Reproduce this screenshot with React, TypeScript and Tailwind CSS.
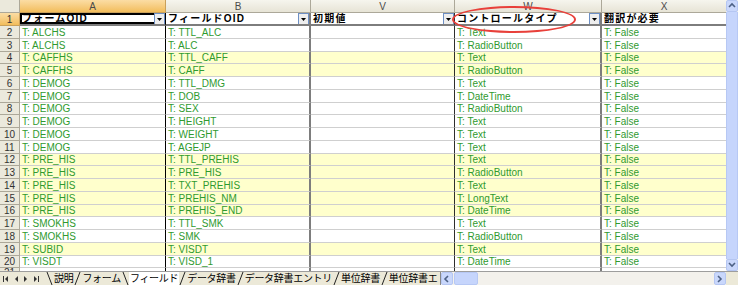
import React from 'react'

const rows = [
  ['ALCHS', 'TTL_ALC', 'Text', false],
  ['ALCHS', 'ALC', 'RadioButton', false],
  ['CAFFHS', 'TTL_CAFF', 'Text', true],
  ['CAFFHS', 'CAFF', 'RadioButton', true],
  ['DEMOG', 'TTL_DMG', 'Text', false],
  ['DEMOG', 'DOB', 'DateTime', false],
  ['DEMOG', 'SEX', 'RadioButton', false],
  ['DEMOG', 'HEIGHT', 'Text', false],
  ['DEMOG', 'WEIGHT', 'Text', false],
  ['DEMOG', 'AGEJP', 'Text', false],
  ['PRE_HIS', 'TTL_PREHIS', 'Text', true],
  ['PRE_HIS', 'PRE_HIS', 'RadioButton', true],
  ['PRE_HIS', 'TXT_PREHIS', 'Text', true],
  ['PRE_HIS', 'PREHIS_NM', 'LongText', true],
  ['PRE_HIS', 'PREHIS_END', 'DateTime', true],
  ['SMOKHS', 'TTL_SMK', 'Text', false],
  ['SMOKHS', 'SMK', 'RadioButton', false],
  ['SUBID', 'VISDT', 'Text', true],
  ['VISDT', 'VISD_1', 'DateTime', false],
] as const

const font = "font-['Liberation_Sans','Noto_Sans_CJK_JP',sans-serif]"

const colW = [
  'w-[146px] border-r border-black',
  'w-[145px] border-r-2 border-[#7d7d7d]',
  'w-[144px] border-r border-[#2e2e2e]',
  'w-[147px] border-r-2 border-[#7d7d7d]',
  'w-[124px]',
]

function DropBtn() {
  return (
    <div className="absolute right-0 top-0 w-[11px] h-[12px] bg-[#eeeeee] border border-[#6d8fc4] flex items-center justify-center">
      <svg width="5" height="3" viewBox="0 0 5 3">
        <path d="M0 0h5L2.5 3z" fill="#000" />
      </svg>
    </div>
  )
}

function Chevron({ dir }: { dir: 'up' | 'down' | 'left' | 'right' }) {
  const d = {
    up: 'M1 5 L4 2 L7 5',
    down: 'M1 2 L4 5 L7 2',
    left: 'M5 1 L2 4 L5 7',
    right: 'M2 1 L5 4 L2 7',
  }[dir]
  return (
    <svg width="8" height="8" viewBox="0 0 8 8">
      <path d={d} fill="none" stroke="#4d6185" strokeWidth="1.6" />
    </svg>
  )
}

function NavArrow({ dir, bar }: { dir: 'left' | 'right'; bar?: boolean }) {
  return (
    <svg width="10" height="8" viewBox="0 0 10 8">
      {dir === 'left' ? (
        <>
          {bar && <rect x="2" y="1" width="1" height="6" fill="#333" />}
          <path d="M7 1 L4 4 L7 7z" fill="#333" />
        </>
      ) : (
        <>
          <path d="M3 1 L6 4 L3 7z" fill="#333" />
          {bar && <rect x="7" y="1" width="1" height="6" fill="#333" />}
        </>
      )}
    </svg>
  )
}

function Slash({ back }: { back?: boolean }) {
  return (
    <svg width="7" height="13" viewBox="0 0 7 13" className="shrink-0">
      <line x1={back ? 1 : 6} y1="0" x2={back ? 6 : 1} y2="13" stroke="#222" strokeWidth="1" />
    </svg>
  )
}

export default function App() {
  const tabs = ['説明', 'フォーム', 'フィールド', 'データ辞書', 'データ辞書エントリ', '単位辞書', '単位辞書エ']
  return (
    <div className={`relative w-[738px] h-[285px] overflow-hidden bg-white flex flex-col ${font}`}>
      <div className="flex h-[271px] overflow-hidden">
        <div className="w-[726px] flex flex-col">
          {/* column letters */}
          <div className="flex h-[13px] shrink-0 text-[10px] text-[#4a4a4a]">
            <div className="w-[20px] bg-[#ebe9dc] border-r border-b border-[#aca899]" />
            {['A', 'B', 'V', 'W', 'X'].map((c, i) => (
              <div
                key={c}
                className={`flex items-center justify-center border-b ${
                  i === 0
                    ? 'w-[146px] bg-gradient-to-b from-[#fbdda4] to-[#f2bd5a] border-r border-[#c9a05a] border-b-[#c9a05a]'
                    : i === 4
                      ? 'w-[124px] bg-gradient-to-b from-[#f6f5ee] to-[#e7e4d6] border-[#aca899]'
                      : i === 1
                        ? 'w-[145px] bg-gradient-to-b from-[#f6f5ee] to-[#e7e4d6] border-r border-[#aca899]'
                        : i === 2
                          ? 'w-[144px] bg-gradient-to-b from-[#f6f5ee] to-[#e7e4d6] border-r border-[#aca899]'
                          : 'w-[147px] bg-gradient-to-b from-[#f6f5ee] to-[#e7e4d6] border-r border-[#aca899]'
                }`}
              >
                {c}
              </div>
            ))}
          </div>

          {/* header row 1 */}
          <div className="flex h-[13px] shrink-0">
            <div className="w-[20px] bg-gradient-to-b from-[#fbdda4] to-[#f2bd5a] border-r border-b border-[#c9a05a] text-[10px] text-[#333] flex items-center justify-center">
              1
            </div>
            {['フォームOID', 'フィールドOID', '初期値', 'コントロールタイプ', '翻訳が必要'].map((t, i) => (
              <div
                key={t}
                className={`relative ${colW[i]} border-b-2 border-b-[#7d7d7d] bg-white text-[10px] font-bold text-black pl-[2px] leading-[11px] tracking-[1.2px] whitespace-nowrap overflow-hidden ${
                  i === 0 ? 'shadow-[inset_0_0_0_2px_#000]' : ''
                }`}
              >
                {t}
                {i < 4 && <DropBtn />}
              </div>
            ))}
          </div>

          {/* data rows */}
          {rows.map((r, idx) => {
            const n = idx + 2
            const h = (idx + 1) % 4 === 3 ? 'h-[12px]' : 'h-[13px]'
            const bg = r[3] ? 'bg-[#ffffcc]' : 'bg-white'
            const cells = [`T: ${r[0]}`, `T: ${r[1]}`, '', `T: ${r[2]}`, 'T: False']
            return (
              <div key={n} className={`flex ${h} shrink-0`}>
                <div className="w-[20px] bg-[#ebe9dc] border-r border-b border-[#aca899] text-[10px] text-[#333] flex items-center justify-center">
                  {n}
                </div>
                {cells.map((c, i) => (
                  <div
                    key={i}
                    className={`${colW[i]} ${bg} border-b border-b-[#cfcfcf] text-[10px] text-[#2f9a2f] pl-[2px] flex items-center whitespace-nowrap overflow-hidden`}
                  >
                    {c}
                  </div>
                ))}
              </div>
            )
          })}

          {/* row 21 partial */}
          <div className="flex h-[13px] shrink-0">
            <div className="w-[20px] bg-[#ebe9dc] border-r border-[#aca899] text-[10px] text-[#333] flex items-start justify-center leading-[10px]">
              21
            </div>
            {colW.map((w, i) => (
              <div key={i} className={`${w} bg-white`} />
            ))}
          </div>
        </div>

        {/* vertical scrollbar */}
        <div className="w-[12px] flex flex-col bg-[#f3f1ec]">
          <div className="h-[12px] bg-[#c9d7fb] border border-[#b5c6f2] rounded-[2px] flex items-center justify-center">
            <Chevron dir="up" />
          </div>
          <div className="flex-1 bg-[#c6d5fc] border-x border-[#b7c8f4]" />
          <div className="h-[12px] bg-[#c9d7fb] border border-[#b5c6f2] rounded-[2px] flex items-center justify-center">
            <Chevron dir="down" />
          </div>
        </div>
      </div>

      {/* sheet tabs + horizontal scrollbar */}
      <div className="flex h-[14px] bg-[#ece9d8] border-t border-[#9d9d9d]">
        <div className="w-[440px] flex items-center overflow-hidden">
          <div className="flex items-center pl-[1px] w-[46px] shrink-0">
            <NavArrow dir="left" bar />
            <NavArrow dir="left" />
            <NavArrow dir="right" />
            <NavArrow dir="right" bar />
          </div>
          <div className="flex items-center text-[10px] text-black whitespace-nowrap h-full">
            {tabs.map((t, i) => (
              <React.Fragment key={t}>
                <Slash back={i === 0 || i === 2} />
                <span className={`px-[1px] h-full flex items-center tracking-[-0.3px] ${i === 2 ? 'bg-white' : ''}`}>{t}</span>
              </React.Fragment>
            ))}
          </div>
        </div>
        <div className="w-[286px] flex bg-[#f3f1ec] border-l border-[#888]">
          <div className="w-[12px] bg-[#c9d7fb] border border-[#b5c6f2] rounded-[2px] flex items-center justify-center">
            <Chevron dir="left" />
          </div>
          <div className="w-[24px] ml-[1px] bg-[#c6d5fc] border border-[#b7c8f4] rounded-[2px]" />
          <div className="flex-1" />
          <div className="w-[12px] bg-[#c9d7fb] border border-[#b5c6f2] rounded-[2px] flex items-center justify-center">
            <Chevron dir="right" />
          </div>
        </div>
        <div className="w-[12px] bg-[#ece9d8]" />
      </div>

      {/* red annotation ellipse */}
      <div className="absolute left-[452px] top-[6px] w-[124px] h-[27px] rounded-[50%] border-2 border-[#e8403a] pointer-events-none" />
    </div>
  )
}
